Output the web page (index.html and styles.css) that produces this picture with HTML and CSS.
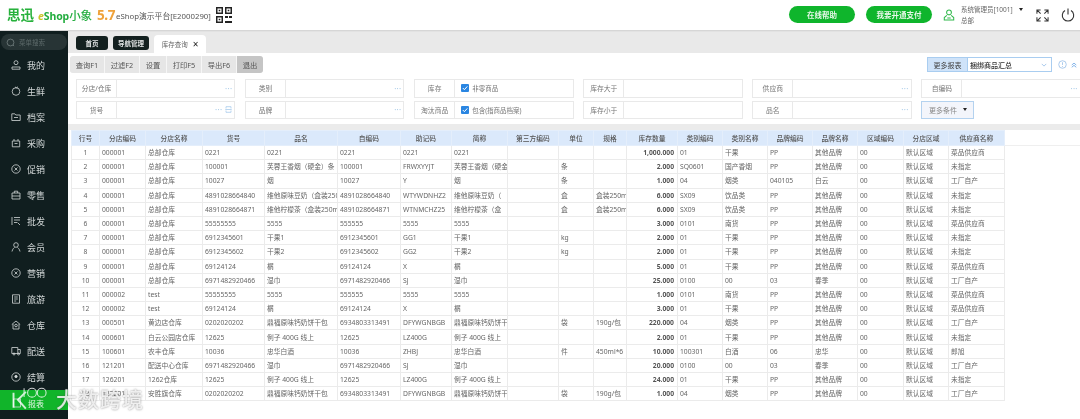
FILE: index.html
```html
<!DOCTYPE html>
<html lang="zh-CN">
<head>
<meta charset="utf-8">
<title>eShop</title>
<link rel="stylesheet" href="styles.css">
</head>
<body>
<div class="app">
<header class="header">
  <span class="logo-cn">思迅</span>
  <span class="logo-shop"><i>e</i>Shop<b>小象</b></span>
  <span class="logo-ver">5.7</span>
  <span class="org">eShop演示平台[E2000290]</span>
  <svg class="qr" viewBox="0 0 16 16"><path fill="#222" d="M0 0h7v7H0zM9 0h7v7H9zM0 9h7v7H0zM9 9h3v2H9zM13 9h3v2h-3zM9 14h7v2H9z"/><path fill="#fff" d="M1.5 1.5h4v4h-4zM10.500 1.500h4v4h-4zM1.500 10.500h4v4h-4z"/><path fill="#222" d="M2.700 2.700h1.600v1.600H2.700zM11.700 2.700h1.600v1.600h-1.600zM2.700 11.700h1.600v1.600H2.700z"/></svg>
  <span class="head-fill"></span>
  <a class="pill pill-a">在线帮助</a>
  <a class="pill pill-b">我要开通支付</a>
  <svg class="user-ic" viewBox="0 0 14 14" fill="none" stroke="#2fb84a" stroke-width="1.200"><circle cx="7" cy="4" r="2.800"/><path d="M4.500 7.500 1.500 10v2.800h11V10l-3-2.500M5 10.500h4"/></svg>
  <div class="user"><span class="user-name">系统管理员[1001]<em class="caret"></em></span><span>总部</span></div>
  <svg class="expand" viewBox="0 0 14 14" fill="none" stroke="#333" stroke-width="1.100"><path d="M1 5V1h4M1 1l4 4M13 5V1H9M13 1 9 5M1 9v4h4M1 13l4-4M13 9v4H9M13 13 9 9"/></svg>
  <svg class="power" viewBox="0 0 14 14" fill="none" stroke="#333" stroke-width="1.100"><path d="M4 2.500a5.700 5.700 0 1 0 6 0M7 .5v6"/></svg>
</header>
<div class="body">
<nav class="side">
  <div class="search"><svg viewBox="0 0 10 10" fill="none" stroke="#7c8888" stroke-width=".8"><circle cx="5" cy="5" r="3.800"/><path d="m7.800 7.800 1.200 1.200"/></svg><span>菜单搜索</span></div>
  <a class="item"><svg viewBox="0 0 10 10"><circle cx="5" cy="2.700" r="2"/><path d="M1 9.200h8V7H1z"/></svg>我的</a>
  <a class="item"><svg viewBox="0 0 10 10"><circle cx="5" cy="5.500" r="3.800"/><path d="M4 1 5.500 1.800 7 .8"/></svg>生鲜</a>
  <a class="item"><svg viewBox="0 0 10 10"><path d="M.8 1.800h3l1 1.200h4.400v5.500H.8zM3 5.500h4"/></svg>档案</a>
  <a class="item"><svg viewBox="0 0 10 10"><path d="M1.300 3h7.400v5.800H1.300zM3 3V1M7 3V1M3.500 5.500h3"/></svg>采购</a>
  <a class="item"><svg viewBox="0 0 10 10"><circle cx="5" cy="5" r="4.200"/><path d="m3.500 3.500 3 3M6.500 3.500l-3 3"/></svg>促销</a>
  <a class="item"><svg viewBox="0 0 10 10"><path d="M1 3h8v6H1zM3.300 3V1.200h3.400V3M1 6h8"/></svg>零售</a>
  <a class="item"><svg viewBox="0 0 10 10"><path d="M1 1v8M3 1.500h6M3 4h6M3 6.500h3M6.500 6.500 9 9"/></svg>批发</a>
  <a class="item"><svg viewBox="0 0 10 10"><circle cx="5" cy="3" r="2.300"/><path d="M1 9.500C1.500 7 3 5.800 3.500 5.500M9 9.500C8.500 7 7 5.800 6.500 5.500"/></svg>会员</a>
  <a class="item"><svg viewBox="0 0 10 10"><circle cx="5" cy="5" r="4.200"/><path d="m3.500 3.500 3 3M6.500 3.500l-3 3"/></svg>营销</a>
  <a class="item"><svg viewBox="0 0 10 10"><path d="M1.500 .8h7v8.400h-7zM3.200 3h3.600M3.200 5h3.600M3.200 7h2"/></svg>旅游</a>
  <a class="item"><svg viewBox="0 0 10 10"><path d="M.8 4.500 5 1l4.200 3.500M2 4v5h6V4"/><circle cx="5" cy="5.500" r="1.300"/></svg>仓库</a>
  <a class="item"><svg viewBox="0 0 10 10"><path d="M.8 1.500h6v6H.8zM6.800 3.500h2.500v4H6.800"/><circle cx="3" cy="8" r="1"/><circle cx="7.500" cy="8" r="1"/></svg>配送</a>
  <a class="item"><svg viewBox="0 0 10 10"><circle cx="5" cy="5" r="4.200"/><circle class="dot" cx="5" cy="4.500" r="1.200"/></svg>结算</a>
  <a class="item item-on"><svg viewBox="0 0 10 10"><path d="M1.500 1h7v8h-7z"/></svg>报表</a>
</nav>
<main class="content">
  <div class="tabs">
    <a class="tab-dark">首页</a>
    <a class="tab-dark">导航管理</a>
    <a class="tab-on">库存查询<span class="tab-x">×</span></a>
  </div>
  <div class="bar">
    <div class="tools">
      <a class="tool">查询F1</a><a class="tool">过滤F2</a><a class="tool tool-s">设置</a><a class="tool">打印F5</a><a class="tool">导出F6</a><a class="tool tool-s tool-on">退出</a>
    </div>
    <div class="report">
      <span class="report-l">更多报表</span>
      <span class="report-s">捆绑商品汇总<svg viewBox="0 0 8 5" fill="none" stroke="#8db8e6" stroke-width="1"><path d="m1 1 3 3 3-3"/></svg></span>
      <svg class="help" viewBox="0 0 10 10" fill="none" stroke="#8db8e6" stroke-width=".8"><circle cx="5" cy="5" r="4.200"/><path d="M5 2.500v3M5 6.800v1"/></svg>
      <svg class="up" viewBox="0 0 8 8" fill="none" stroke="#5a9be0" stroke-width="1"><path d="M1 4 4 1.500 7 4M1 7 4 4.500 7 7"/></svg>
    </div>
  </div>
  <div class="filters">
    <div class="field"><label>分店/仓库</label><span class="val"><u>···</u></span></div>
    <div class="field"><label>类别</label><span class="val"><u>···</u></span></div>
    <div class="field"><label>库存</label><span class="val val-c"><svg class="chk" viewBox="0 0 8 8"><rect width="8" height="8" rx="1" fill="#2a86e2"/><path d="m1.800 4 1.600 1.700 2.900-3.300" fill="none" stroke="#fff" stroke-width="1"/></svg>非零商品</span></div>
    <div class="field"><label>库存大于</label><span class="val"></span></div>
    <div class="field"><label>供应商</label><span class="val"><u>···</u></span></div>
    <div class="field"><label>自编码</label><span class="val"><u>···</u></span></div>
    <div class="field"><label>货号</label><span class="val"><u>···</u><svg class="scan" viewBox="0 0 7 7" fill="none" stroke="#9cc4ea" stroke-width=".7"><path d="M1 2.500V.7h5v1.800M1 4.500v1.800h5V4.500M.3 3.500h6.400"/></svg></span></div>
    <div class="field"><label>品牌</label><span class="val"><u>···</u></span></div>
    <div class="field"><label>淘汰商品</label><span class="val val-c"><svg class="chk" viewBox="0 0 8 8"><rect width="8" height="8" rx="1" fill="#2a86e2"/><path d="m1.800 4 1.600 1.700 2.900-3.300" fill="none" stroke="#fff" stroke-width="1"/></svg>包含(指商品档案)</span></div>
    <div class="field"><label>库存小于</label><span class="val"></span></div>
    <div class="field"><label>品名</label><span class="val"><u>···</u></span></div>
    <a class="more">更多条件<em class="caret"></em></a>
  </div>
  <div class="grid-wrap">
  <table class="grid">
    <colgroup><col class="c1"><col class="c2"><col class="c3"><col class="c4"><col class="c5"><col class="c6"><col class="c7"><col class="c8"><col class="c9"><col class="c10"><col class="c11"><col class="c12"><col class="c13"><col class="c14"><col class="c15"><col class="c16"><col class="c17"><col class="c18"><col class="c19"><col></colgroup>
    <thead><tr><th>行号</th><th>分店编码</th><th>分店名称</th><th>货号</th><th>品名</th><th>自编码</th><th>助记码</th><th>简称</th><th>第三方编码</th><th>单位</th><th>规格</th><th>库存数量</th><th>类别编码</th><th>类别名称</th><th>品牌编码</th><th>品牌名称</th><th>区域编码</th><th>分店区域</th><th>供应商名称</th><th class="fill"></th></tr></thead>
    <tbody>
<tr><td>1</td><td>000001</td><td>总部仓库</td><td>0221</td><td>0221</td><td>0221</td><td>0221</td><td>0221</td><td></td><td></td><td></td><td>1,000.000</td><td>01</td><td>干果</td><td>PP</td><td>其他品牌</td><td>00</td><td>默认区域</td><td>菜品供应商</td></tr>
<tr><td>2</td><td>000001</td><td>总部仓库</td><td>100001</td><td>芙蓉王香烟（硬金）条</td><td>100001</td><td>FRWXYYJT</td><td>芙蓉王香烟（硬金</td><td></td><td>条</td><td></td><td>2.000</td><td>SQ0601</td><td>国产香烟</td><td>PP</td><td>其他品牌</td><td>00</td><td>默认区域</td><td>未指定</td></tr>
<tr><td>3</td><td>000001</td><td>总部仓库</td><td>10027</td><td>烟</td><td>10027</td><td>Y</td><td>烟</td><td></td><td>条</td><td></td><td>1.000</td><td>04</td><td>烟类</td><td>040105</td><td>白云</td><td>00</td><td>默认区域</td><td>工厂自产</td></tr>
<tr><td>4</td><td>000001</td><td>总部仓库</td><td>4891028664840</td><td>维他原味豆奶（盒装250ml</td><td>4891028664840</td><td>WTYWDNHZ2</td><td>维他原味豆奶（</td><td></td><td>盒</td><td>盒装250ml</td><td>6.000</td><td>SX09</td><td>饮品类</td><td>PP</td><td>其他品牌</td><td>00</td><td>默认区域</td><td>未指定</td></tr>
<tr><td>5</td><td>000001</td><td>总部仓库</td><td>4891028664871</td><td>维他柠檬茶（盒装250ml</td><td>4891028664871</td><td>WTNMCHZ25</td><td>维他柠檬茶（盒</td><td></td><td>盒</td><td>盒装250ml</td><td>6.000</td><td>SX09</td><td>饮品类</td><td>PP</td><td>其他品牌</td><td>00</td><td>默认区域</td><td>未指定</td></tr>
<tr><td>6</td><td>000001</td><td>总部仓库</td><td>55555555</td><td>5555</td><td>555555</td><td>5555</td><td>5555</td><td></td><td></td><td></td><td>3.000</td><td>0101</td><td>南货</td><td>PP</td><td>其他品牌</td><td>00</td><td>默认区域</td><td>菜品供应商</td></tr>
<tr><td>7</td><td>000001</td><td>总部仓库</td><td>6912345601</td><td>干果1</td><td>6912345601</td><td>GG1</td><td>干果1</td><td></td><td>kg</td><td></td><td>2.000</td><td>01</td><td>干果</td><td>PP</td><td>其他品牌</td><td>00</td><td>默认区域</td><td>未指定</td></tr>
<tr><td>8</td><td>000001</td><td>总部仓库</td><td>6912345602</td><td>干果2</td><td>6912345602</td><td>GG2</td><td>干果2</td><td></td><td>kg</td><td></td><td>2.000</td><td>01</td><td>干果</td><td>PP</td><td>其他品牌</td><td>00</td><td>默认区域</td><td>未指定</td></tr>
<tr><td>9</td><td>000001</td><td>总部仓库</td><td>69124124</td><td>榍</td><td>69124124</td><td>X</td><td>榍</td><td></td><td></td><td></td><td>5.000</td><td>01</td><td>干果</td><td>PP</td><td>其他品牌</td><td>00</td><td>默认区域</td><td>菜品供应商</td></tr>
<tr><td>10</td><td>000001</td><td>总部仓库</td><td>6971482920466</td><td>湿巾</td><td>6971482920466</td><td>SJ</td><td>湿巾</td><td></td><td></td><td></td><td>25.000</td><td>0100</td><td>00</td><td>03</td><td>春季</td><td>00</td><td>默认区域</td><td>工厂自产</td></tr>
<tr><td>11</td><td>000002</td><td>test</td><td>55555555</td><td>5555</td><td>555555</td><td>5555</td><td>5555</td><td></td><td></td><td></td><td>1.000</td><td>0101</td><td>南货</td><td>PP</td><td>其他品牌</td><td>00</td><td>默认区域</td><td>菜品供应商</td></tr>
<tr><td>12</td><td>000002</td><td>test</td><td>69124124</td><td>榍</td><td>69124124</td><td>X</td><td>榍</td><td></td><td></td><td></td><td>3.000</td><td>01</td><td>干果</td><td>PP</td><td>其他品牌</td><td>00</td><td>默认区域</td><td>菜品供应商</td></tr>
<tr><td>13</td><td>000501</td><td>黄边店仓库</td><td>0202020202</td><td>鼎福原味钙奶饼干包</td><td>6934803313491</td><td>DFYWGNBGB</td><td>鼎福原味钙奶饼干</td><td></td><td>袋</td><td>190g/包</td><td>220.000</td><td>04</td><td>烟类</td><td>PP</td><td>其他品牌</td><td>00</td><td>默认区域</td><td>工厂自产</td></tr>
<tr><td>14</td><td>000601</td><td>白云公园店仓库</td><td>12625</td><td>例子 400G 线上</td><td>12625</td><td>LZ400G</td><td>例子 400G 线上</td><td></td><td></td><td></td><td>2.000</td><td>01</td><td>干果</td><td>PP</td><td>其他品牌</td><td>00</td><td>默认区域</td><td>未指定</td></tr>
<tr><td>15</td><td>100601</td><td>农丰仓库</td><td>10036</td><td>忠华白酒</td><td>10036</td><td>ZHBJ</td><td>忠华白酒</td><td></td><td>件</td><td>450ml*6</td><td>10.000</td><td>100301</td><td>白酒</td><td>06</td><td>忠华</td><td>00</td><td>默认区域</td><td>郎旭</td></tr>
<tr><td>16</td><td>121201</td><td>配送中心仓库</td><td>6971482920466</td><td>湿巾</td><td>6971482920466</td><td>SJ</td><td>湿巾</td><td></td><td></td><td></td><td>20.000</td><td>0100</td><td>00</td><td>03</td><td>春季</td><td>00</td><td>默认区域</td><td>工厂自产</td></tr>
<tr><td>17</td><td>126201</td><td>1262仓库</td><td>12625</td><td>例子 400G 线上</td><td>12625</td><td>LZ400G</td><td>例子 400G 线上</td><td></td><td></td><td></td><td>24.000</td><td>01</td><td>干果</td><td>PP</td><td>其他品牌</td><td>00</td><td>默认区域</td><td>未指定</td></tr>
<tr><td>18</td><td>122201</td><td>安胜旗仓库</td><td>0202020202</td><td>鼎福原味钙奶饼干包</td><td>6934803313491</td><td>DFYWGNBGB</td><td>鼎福原味钙奶饼干</td><td></td><td>袋</td><td>190g/包</td><td>1.000</td><td>04</td><td>烟类</td><td>PP</td><td>其他品牌</td><td>00</td><td>默认区域</td><td>工厂自产</td></tr>
    </tbody>
  </table>
  </div>
</main>
</div>
<div class="mark">
  <svg viewBox="0 0 50 26" fill="none" stroke="#fff" stroke-width="2.200"><path d="M4 7v17M18 6 9 15l9 10"/><path stroke-width="1.200" d="M16 2v10"/><circle stroke-width="1.200" cx="25" cy="7" r="5"/><circle stroke-width="1.200" cx="36" cy="7" r="5"/></svg>
  <span>大数跨境</span>
</div>
</div>
</body>
</html>
```
FILE: styles.css
```css
* { box-sizing: border-box; }
html, body { margin: 0; height: 100%; overflow: hidden; background: #fff; }
.app {
  position: relative;
  width: 1080px;
  height: 419px;
  overflow: hidden;
  font-family: "Noto Sans", "Noto Sans CJK SC", sans-serif;
  font-size: 7px;
  color: #666;
  filter: blur(0.3px);
}
a { color: inherit; text-decoration: none; }
.caret { display: inline-block; border: 2.500px solid transparent; border-top: 3.500px solid #222; border-bottom: 0; margin-left: 6px; vertical-align: 1px; }

/* header */
.header { height: 31px; display: flex; align-items: center; padding-left: 7px; border-bottom: 1px solid #d6d6d6; }
.logo-cn { font-family: "Noto Sans CJK SC", sans-serif; font-weight: 700; font-size: 13.500px; line-height: 1; color: #27b13c; width: 31px; }
.logo-shop { font-weight: 700; font-size: 10.500px; color: #23ad3f; width: 59px; white-space: nowrap; letter-spacing: -.1px; }
.logo-shop i { color: #c9c52c; }
.logo-shop b { font-family: "Noto Sans CJK SC", sans-serif; font-size: 11.500px; font-weight: 500; }
.logo-ver { font-weight: 700; font-size: 13.500px; color: #efa23a; width: 19px; letter-spacing: -.4px; }
.org { font-size: 7.800px; color: #555; width: 100px; white-space: nowrap; }
.qr { width: 16px; height: 16px; }
.head-fill { flex: 1; }
.pill { width: 66px; height: 17px; border-radius: 9px; background: #0fb52c; color: #e9f8ea; font-size: 7.500px; font-weight: 700; display: flex; align-items: center; justify-content: center; margin-right: 11px; margin-top: -1px; }
.user-ic { width: 12px; height: 12px; margin-right: 6px; }
.user { width: 75px; display: flex; flex-direction: column; gap: 3px; font-size: 6.500px; line-height: 8px; }
.user-name { white-space: nowrap; }
.expand { width: 13px; height: 13px; margin-right: 12px; }
.power { width: 14px; height: 14px; margin-right: 5px; }

/* sidebar */
.body { display: flex; height: 388px; }
.side { width: 68px; flex: none; background: #101e1f; color: #d8dcdc; padding-top: 3px; }
.search { margin: 0 1px 2px; height: 16px; border-radius: 8px; background: #273435; display: flex; align-items: center; gap: 4px; padding-left: 5px; color: #5d6a6a; font-size: 6.500px; }
.search svg { width: 9px; height: 9px; }
.item { display: flex; align-items: center; height: 26px; padding-left: 11px; gap: 6px; font-size: 9px; color: #d3d8d8; }
.item svg { width: 10px; height: 10px; fill: none; stroke: #d3d8d8; stroke-width: .8; flex: none; }
.item .dot { fill: #d3d8d8; }
.item-on { height: 20px; background: #11b42a; padding-top: 6px; padding-left: 12px; color: #dff5e2; font-size: 8px; }

/* content */
.content { flex: 1; min-width: 0; }
.tabs { height: 22px; background: #e9e9e9; display: flex; align-items: flex-end; padding-left: 8px; gap: 5px; border-top: 1px solid #e2e2e2; }
.tab-dark { height: 14px; padding: 0 5px; margin-bottom: 3px; min-width: 32px; background: #13201f; color: #e4e7e7; border-radius: 3px; font-size: 6.500px; font-weight: 700; display: flex; align-items: center; justify-content: center; }
.tab-on { height: 18px; width: 52px; background: #fff; border-radius: 4px 4px 0 0; display: flex; align-items: center; justify-content: center; gap: 5px; font-size: 6.500px; color: #666; }
.tab-x { font-size: 10px; color: #222; line-height: 1; }
.bar { display: flex; justify-content: space-between; align-items: center; height: 17px; margin-top: 3px; padding: 0 3px 0 2px; }
.tools { display: flex; height: 17px; background: #f6f6f6; border-radius: 3px; overflow: hidden; gap: 1px; font-size: 7.300px; color: #555; }
.tool { width: 34px; display: flex; align-items: center; justify-content: center; background: #e6e6e6; }
.tool-s { width: 26px; }
.tool-on { background: #c5c5c5; }
.report { display: flex; align-items: center; }
.report-l { width: 41px; height: 15px; background: #cfe3f9; color: #444; border: 1px solid #a9cdf0; display: flex; align-items: center; justify-content: center; }
.report-s { width: 84px; height: 15px; border: 1px solid #a9cdf0; border-left: 0; padding: 0 4px 0 2px; color: #333; display: flex; align-items: center; justify-content: space-between; font-weight: 500; }
.report-s svg { width: 6px; height: 4px; }
.help { width: 9px; height: 9px; margin: 0 4px 0 6px; }
.up { width: 6px; height: 6px; }
.filters { display: grid; grid-template-columns: repeat(6, 159.400px); column-gap: 9.700px; row-gap: 3px; grid-auto-rows: 18.500px; margin: 6px 0 5px 8px; }
.field { display: flex; border: 1px solid #e9e9e9; }
.field label { width: 40px; flex: none; border-right: 1px solid #e9e9e9; display: flex; align-items: center; justify-content: center; white-space: nowrap; color: #777; font-size: 6.800px; }
.val { flex: 1; display: flex; align-items: center; justify-content: flex-end; padding-right: 2px; gap: 3px; }
.val u { text-decoration: none; color: #a9cbe8; font-size: 8px; letter-spacing: .3px; }
.val-c { justify-content: flex-start; padding-left: 6px; gap: 3px; color: #777; font-size: 6.500px; }
.chk { width: 8px; height: 8px; }
.scan { width: 7px; height: 7px; }
.more { width: 53px; height: 18px; background: #f3f5fb; border: 1px solid #b4d2ef; display: flex; align-items: center; justify-content: center; color: #888; }
.grid-wrap { border-top: 6px solid #ebebeb; padding-left: 3px; }
.grid { border-collapse: collapse; table-layout: fixed; width: 1009px; font-size: 6.750px; }
.c1 { width: 28px; } .c2 { width: 46px; } .c3 { width: 57px; } .c4 { width: 62px; } .c5 { width: 73px; }
.c6 { width: 63px; } .c7 { width: 51px; } .c8 { width: 56px; } .c9 { width: 51px; } .c10 { width: 35px; }
.c11 { width: 33px; } .c12 { width: 51px; } .c13 { width: 45px; } .c14 { width: 45px; } .c15 { width: 45px; }
.c16 { width: 45px; } .c17 { width: 46px; } .c18 { width: 45px; } .c19 { width: 56px; }
.grid th, .grid td { padding: 1px 0 0 2px; overflow: hidden; white-space: nowrap; font-weight: 400; border: 1px solid #ebebeb; line-height: 10px; }
.grid thead tr { height: 15px; }
.grid tbody tr { height: 14.190px; }
.grid th { background: #dbe9fb; color: #555; text-align: center; padding: 1px 0 0; border-color: #e4eefb; font-weight: 500; }
.grid th.fill { background: #fff; border: 0; border-bottom: 1px solid #efefef; }
.grid td:first-child { text-align: center; padding: 1px 0 0; }
.grid td:nth-child(12) { text-align: right; padding: 1px 3px 0 0; font-weight: 700; color: #555; }

/* watermark overlay */
.mark { position: absolute; left: 10px; top: 385px; display: flex; align-items: center; gap: 2px; color: rgba(255,255,255,.82); text-shadow: 0 0 2px rgba(80,80,80,.7); font-family: "Noto Sans CJK SC", sans-serif; font-size: 21px; font-weight: 500; line-height: 26px; letter-spacing: 1px; }
.mark svg { width: 44px; height: 24px; opacity: .8; }
```
